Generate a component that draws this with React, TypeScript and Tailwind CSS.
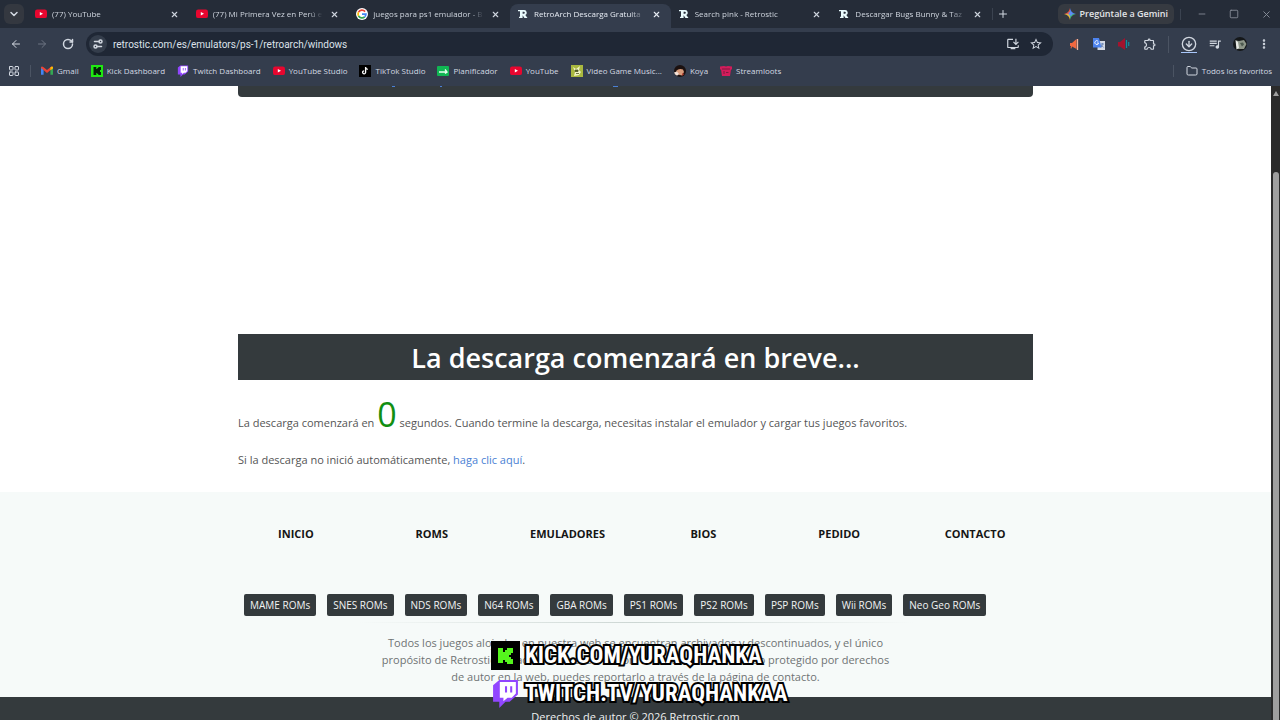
import type { ReactNode } from "react";
import {
  ChevronDown,
  X,
  Plus,
  Minus,
  Square,
  ArrowLeft,
  ArrowRight,
  RotateCw,
  EllipsisVertical,
  Folder,
  LayoutGrid,
  CircleArrowDown,
  Settings2,
} from "lucide-react";
import { MdInstallDesktop, MdOutlineExtension, MdQueueMusic, MdStarBorder } from "react-icons/md";

const YouTubeIcon = () => (
  <svg viewBox="0 0 12 12" className="size-3 shrink-0">
    <rect x="0" y="1.5" width="12" height="8.6" rx="2.2" fill="#e8062f" />
    <path d="M4.8 4 8 5.8 4.8 7.6z" fill="#fff" />
  </svg>
);

const GoogleIcon = () => (
  <svg viewBox="0 0 24 24" className="size-3 shrink-0">
    <circle cx="12" cy="12" r="12" fill="#fff" />
    <path d="M18.2 7.2A8 8 0 0 0 5 8.3" fill="none" stroke="#ea4335" strokeWidth="3.4" />
    <path d="M5 8.3a8 8 0 0 0 0 7.4" fill="none" stroke="#fbbc05" strokeWidth="3.4" />
    <path d="M5 15.7a8 8 0 0 0 12.4 2.1" fill="none" stroke="#34a853" strokeWidth="3.4" />
    <path d="M17.4 17.8a8 8 0 0 0 2.5-5.6H12" fill="none" stroke="#4285f4" strokeWidth="3.4" />
  </svg>
);

const RetrosticIcon = () => (
  <svg viewBox="0 0 12 12" className="size-3 shrink-0">
    <path
      d="M1 2h6.200a2.700 2.700 0 0 1 1.100 5.100L10.500 10H7.500L5.600 7.300V10H2V8.800h1V3.200H1z M5.600 3.700v2h1.200a1 1 0 0 0 0-2z"
      fill="#e9fbfd"
      fillRule="evenodd"
    />
  </svg>
);

const GmailIcon = () => (
  <svg viewBox="0 0 12 12" className="size-3 shrink-0">
    <path d="M0 2.500v7.300h2.600V4.500z" fill="#4285f4" />
    <path d="M12 2.500v7.300H9.400V4.500z" fill="#34a853" />
    <path d="M0 3V2q1-1 2.600.3L6 4.900l3.400-2.600Q11 1 12 2v1L6 7.900z" fill="#ea4335" />
    <path d="M9.400 2.300Q11 1 12 2v1.400L9.400 5.300z" fill="#fbbc05" />
  </svg>
);

const KickIcon = () => (
  <svg viewBox="0 0 29 29" className="size-[29px] shrink-0">
    <rect width="29" height="29" fill="#000" />
    <path d="M7 7h5v4h2V9h2V7h6v5h-2v2h-2v2h2v2h2v5h-6v-2h-2v-2h-2v3H7z" fill="#55f51d" />
  </svg>
);

const KickTile = () => (
  <svg viewBox="0 0 12 12" className="size-3 shrink-0">
    <rect width="12" height="12" fill="#20e812" />
    <path d="M2.500 2h2.800v2h1V3h1V2h2.700v3H9v2h1v3H7.300V9h-1V8h-1v2H2.500z" fill="#06210a" />
  </svg>
);

const TwitchIcon = ({ className = "size-3" }: { className?: string }) => (
  <svg viewBox="0 0 26 28" className={`${className} shrink-0`}>
    <path d="M1 6 7 1h18v14l-8 7h-4l-6 6v-6H1z" fill="#9146ff" />
    <path d="M7.500 3H23v11l-4 4h-4l-4 3.500V18H7.500z" fill="#fff" />
    <path d="M12.500 7h2v6h-2zM17.500 7h2v6h-2z" fill="#9146ff" />
  </svg>
);

const TikTokIcon = () => (
  <svg viewBox="0 0 12 12" className="size-3 shrink-0">
    <rect width="12" height="12" fill="#000" />
    <path d="M6.600 2v5.300a1.500 1.500 0 1 1-1.500-1.500M6.600 2.200q.2 1.900 2.200 2.100" fill="none" stroke="#fff" strokeWidth="1.300" />
  </svg>
);

const PlannerIcon = () => (
  <svg viewBox="0 0 12 12" className="size-3 shrink-0">
    <rect y="1" width="12" height="10" rx="1" fill="#10b653" />
    <path d="M2 7h8M8 4.500 10 7 8 8.500" fill="none" stroke="#e8fff0" strokeWidth="1.400" />
  </svg>
);

const MusicIcon = () => (
  <svg viewBox="0 0 12 12" className="size-3 shrink-0">
    <rect width="12" height="12" fill="#a9b83f" />
    <path d="M2 2 5 4l4-3-1 4 2 2-2 3-5 1 1-4z" fill="#f1f3c3" />
    <path d="M4 5h3v1.500H4zM5 8.500h3" fill="#515c20" stroke="#515c20" strokeWidth=".8" />
  </svg>
);

const KoyaIcon = () => (
  <svg viewBox="0 0 12 12" className="size-3 shrink-0">
    <circle cx="6" cy="6" r="6" fill="#1b1110" />
    <path d="M2 6q3-3 7-1.500l1 2.500-2 3.500-4-1z" fill="#d99c7b" />
    <path d="M0 7.500 3 6.500l2 2.500-2 1.800A6 6 0 0 1 0 7.500z" fill="#f3e2d8" />
    <path d="m8 8 2 1-1.500 2z" fill="#c13d2e" />
  </svg>
);

const LootsIcon = () => (
  <svg viewBox="0 0 12 12" className="size-3 shrink-0">
    <path d="M0 1.500 4 1l2 .5L8 1l4 .5v3h-1L10 11H2L1 4.500H0z" fill="#d31c5b" />
    <path d="M2 4h8M4 6v3M6 7.500h2.500" stroke="#7c1a40" fill="none" />
  </svg>
);

const GeminiIcon = () => (
  <svg viewBox="0 0 12 12" className="size-3 shrink-0">
    <path d="M6 0q.8 5.200 6 6H6z" fill="#5484f0" />
    <path d="M6 0q-.8 5.200-6 6h6z" fill="#e95a4c" />
    <path d="M0 6q5.200.8 6 6V6z" fill="#e3b93b" />
    <path d="M12 6q-5.200.8-6 6V6z" fill="#42b37c" />
    <circle cx="6.500" cy="5.800" r="2" fill="#5d8ff2" />
  </svg>
);

const MegaphoneIcon = () => (
  <svg viewBox="0 0 12 12" className="size-3">
    <path d="M2 5h2l4.500-4v10L4 8.500l-.5 2-1-.2L3 8H2z" fill="#f2683f" />
    <path d="M9.500 1v11" stroke="#f0b49d" strokeWidth="1.300" />
  </svg>
);

const TranslateIcon = () => (
  <svg viewBox="0 0 12 12" className="size-3">
    <rect x="4.500" y="3" width="7.500" height="9" fill="#d4dae4" />
    <path d="M0 0h6l2.500 9.500H0z" fill="#4c83ef" />
    <path d="M5.300 3.500A1.900 1.900 0 1 0 5.600 5H4" fill="none" stroke="#fff" strokeWidth=".9" />
    <path d="M7.500 6H11M9.300 5v1q0 2-1.500 3.500M8.200 7l2.500 2.500" fill="none" stroke="#5878b0" strokeWidth=".8" />
  </svg>
);

const SoundIcon = () => (
  <svg viewBox="0 0 12 12" className="size-3">
    <path d="M0 4h2l5-4v12L2 8.500H0z" fill="#a3142e" />
    <path d="M8.500 2v8M10.700 4v4" stroke="#168c9f" strokeWidth="1.200" />
  </svg>
);

const AvatarIcon = () => (
  <svg viewBox="0 0 14 14" className="size-[14px]">
    <circle cx="7" cy="7" r="7" fill="#15181a" />
    <path d="M3 3.500 6 4l5-1 2.500 4L11 12H4.500z" fill="#8d9689" />
    <path d="M2.500 3 5 5l1 6-2.500 1.500z" fill="#e8eae5" />
    <path d="m7 6 3-.5 1 2-2 2z" fill="#4d5a50" />
  </svg>
);

type Tab = { title: string; icon: ReactNode; active?: boolean };

const tabs: Tab[] = [
  { title: "(77) YouTube", icon: <YouTubeIcon /> },
  { title: "(77) Mi Primera Vez en Perú e", icon: <YouTubeIcon /> },
  { title: "juegos para ps1 emulador - B", icon: <GoogleIcon /> },
  { title: "RetroArch Descarga Gratuita", icon: <RetrosticIcon />, active: true },
  { title: "Search pink - Retrostic", icon: <RetrosticIcon /> },
  { title: "Descargar Bugs Bunny & Taz", icon: <RetrosticIcon /> },
];

const bookmarks = [
  { label: "Gmail", icon: <GmailIcon /> },
  { label: "Kick Dashboard", icon: <KickTile /> },
  { label: "Twitch Dashboard", icon: <TwitchIcon /> },
  { label: "YouTube Studio", icon: <YouTubeIcon /> },
  { label: "TikTok Studio", icon: <TikTokIcon /> },
  { label: "Planificador", icon: <PlannerIcon /> },
  { label: "YouTube", icon: <YouTubeIcon /> },
  { label: "Video Game Music...", icon: <MusicIcon /> },
  { label: "Koya", icon: <KoyaIcon /> },
  { label: "Streamloots", icon: <LootsIcon /> },
];

const footerLinks = ["INICIO", "ROMS", "EMULADORES", "BIOS", "PEDIDO", "CONTACTO"];

const consoles = ["MAME", "SNES", "NDS", "N64", "GBA", "PS1", "PS2", "PSP", "Wii", "Neo Geo"];

function TabStrip() {
  return (
    <div className="flex h-7 items-center bg-[#252c38] px-1">
      <button aria-label="Buscar pestañas" className="flex size-5 shrink-0 items-center justify-center rounded-md bg-[#343840]">
        <ChevronDown className="size-3" strokeWidth={3} />
      </button>
      <div className="ml-1 flex max-w-[964px] flex-1 self-stretch pt-1">
        {tabs.map((tab) => (
          <div
            key={tab.title}
            className={`flex min-w-0 flex-1 items-center gap-[5px] pr-[10px] pb-1 pl-[7px] ${
              tab.active ? "rounded-t-lg bg-[#343d4d] text-[#e6ebf3]" : "text-[#cfd5de]"
            }`}
          >
            {tab.icon}
            <span className="min-w-0 flex-1 overflow-hidden whitespace-nowrap [mask-image:linear-gradient(to_right,black_85%,transparent_98%)]">
              {tab.title}
            </span>
            <button aria-label={`Cerrar ${tab.title}`}>
              <X className="size-[9px]" strokeWidth={3} />
            </button>
          </div>
        ))}
      </div>
      <button aria-label="Nueva pestaña" className="border-l border-[#3b4350] pl-1">
        <Plus className="size-3" strokeWidth={2} />
      </button>
      <button className="ml-auto flex h-5 items-center gap-1 rounded-md bg-[#363a41] px-[6px] text-[9px] font-semibold text-[#e3e5e8]">
        <GeminiIcon />
        Pregúntale a Gemini
      </button>
      <div className="ml-[6px] flex items-center gap-[22px] border-l border-[#3b4350] pr-1 pl-4 text-[#8b929c]">
        <button aria-label="Minimizar"><Minus className="size-[10px]" /></button>
        <button aria-label="Maximizar"><Square className="size-[10px]" /></button>
        <button aria-label="Cerrar"><X className="size-[11px]" /></button>
      </div>
    </div>
  );
}

function Toolbar() {
  return (
    <div className="flex h-8 items-center bg-[#343d4d] px-[10px] text-[#d1d7e0]">
      <div className="flex items-center gap-[14px]">
        <button aria-label="Atrás"><ArrowLeft className="size-3" strokeWidth={2} /></button>
        <button aria-label="Adelante" className="text-[#6d7583]"><ArrowRight className="size-3" strokeWidth={2} /></button>
        <button aria-label="Recargar"><RotateCw className="size-3" strokeWidth={3} /></button>
      </div>
      <div className="ml-3 flex h-6 flex-1 items-center rounded-full bg-[#1f2735] pr-[10px] pl-[3px]">
        <button aria-label="Información del sitio" className="flex size-[18px] items-center justify-center rounded-full bg-[#343d4b]">
          <Settings2 className="size-3 -scale-y-100" strokeWidth={3} />
        </button>
        <input
          aria-label="Dirección"
          defaultValue="retrostic.com/es/emulators/ps-1/retroarch/windows"
          className="ml-[6px] min-w-0 flex-1 bg-transparent font-[Roboto,sans-serif] text-[10px] text-[#dde2ea] outline-none"
        />
        <button aria-label="Instalar"><MdInstallDesktop className="size-[14px]" /></button>
        <button aria-label="Favorito" className="ml-[9px]"><MdStarBorder className="size-[14px]" /></button>
      </div>
      <div className="ml-[15px] flex items-center gap-[13px]">
        <button aria-label="Megáfono"><MegaphoneIcon /></button>
        <button aria-label="Traductor"><TranslateIcon /></button>
        <button aria-label="Volumen"><SoundIcon /></button>
        <button aria-label="Extensiones"><MdOutlineExtension className="size-[14px]" /></button>
      </div>
      <div className="ml-[11px] flex items-center gap-[11px] border-l border-[#4b5463] pl-3">
        <button aria-label="Descargas" className="border-b border-[#a9c7fa]">
          <CircleArrowDown className="size-4" strokeWidth={2} />
        </button>
        <button aria-label="Multimedia"><MdQueueMusic className="size-[14px]" /></button>
        <button aria-label="Perfil"><AvatarIcon /></button>
        <button aria-label="Menú"><EllipsisVertical className="size-3" strokeWidth={3} /></button>
      </div>
    </div>
  );
}

function BookmarksBar() {
  return (
    <nav className="flex h-[26px] items-center bg-[#343d4d] px-2 pb-1 text-[#d3d9e2]">
      <button aria-label="Aplicaciones"><LayoutGrid className="size-3" strokeWidth={2} /></button>
      <div className="ml-[10px] flex items-center gap-3 border-l border-[#4b5463] pl-[10px]">
        {bookmarks.map((b) => (
          <a key={b.label} href="#" className="flex items-center gap-1 whitespace-nowrap">
            {b.icon}
            {b.label}
          </a>
        ))}
      </div>
      <a href="#" className="ml-auto flex items-center gap-1 border-l border-[#4b5463] pl-3 whitespace-nowrap">
        <Folder className="size-3" />
        Todos los favoritos
      </a>
    </nav>
  );
}

function StreamOverlay() {
  return (
    <div className="absolute bottom-3 left-[491px] flex flex-col gap-[9px] font-['Liberation_Sans_Narrow','Roboto_Condensed',Roboto,sans-serif] text-[23px] leading-[28px] font-bold text-white [paint-order:stroke_fill] [-webkit-text-stroke:4px_black]">
      <div className="flex items-center gap-[5px]">
        <KickIcon />
        KICK.COM/YURAQHANKA
      </div>
      <div className="flex items-center gap-[5px]">
        <TwitchIcon className="size-[29px]" />
        TWITCH.TV/YURAQHANKAA
      </div>
    </div>
  );
}

export default function App() {
  return (
    <div className="relative flex h-screen flex-col overflow-hidden bg-white font-['Open_Sans',sans-serif] text-[11px]">
      <header className="shrink-0 text-[8px] text-[#d3d9e2]">
        <TabStrip />
        <Toolbar />
        <BookmarksBar />
      </header>

      <div className="flex min-h-0 flex-1">
        <div className="flex min-w-0 flex-1 flex-col text-[#555]">
          <main className="mx-auto w-full max-w-[795px]">
            <div className="h-[11px] rounded-b-sm bg-[#343a3d]">
              {/* Descenders of the links scrolled out of view */}
              <svg viewBox="0 0 795 2" className="h-[2px] w-full">
                <path d="M154 0h3v1h-3zM202 0h2v1h-2zM375 0h5v1h-5z" fill="#4a7fd4" />
              </svg>
            </div>
            <h1 className="mt-[237px] bg-[#343a3d] pt-[2px] text-center text-[27px] leading-[44px] font-semibold text-white">
              La descarga comenzará en breve...
            </h1>
            <p className="mt-3 leading-[44px]">
              La descarga comenzará en <span className="text-[34px] leading-[44px] text-[#128f12]">0</span> segundos. Cuando termine la
              descarga, necesitas instalar el emulador y cargar tus juegos favoritos.
            </p>
            <p className="mt-[7px] mb-6 leading-4">
              Si la descarga no inició automáticamente,{" "}
              <a href="#" className="text-[#4a7fd4]">haga clic aquí</a>.
            </p>
          </main>

          <footer className="flex flex-1 flex-col bg-[#f6faf9]">
            <div className="mx-auto w-full max-w-[815px]">
              <nav className="grid grid-cols-6 pt-[34px] text-center leading-4 font-bold text-[#151515]">
                {footerLinks.map((link) => (
                  <a key={link} href="#">{link}</a>
                ))}
              </nav>
              <div className="mt-[52px] flex gap-[11px] pl-4">
                {consoles.map((name) => (
                  <a key={name} href="#" className="rounded-xs bg-[#343a3d] px-[6px] text-[10px] leading-[22px] font-medium whitespace-nowrap text-[#f2f4f4]">
                    {name} ROMs
                  </a>
                ))}
              </div>
              <div className="mx-auto mt-[6px] h-px w-[556px] bg-linear-to-r from-transparent via-[#ccd6d3] to-transparent" />
              <p className="mx-auto mt-[11px] max-w-[560px] text-center leading-[17px] text-[#6f7374]">
                Todos los juegos alojados en nuestra web se encuentran archivados y descontinuados, y el único
                <br />
                propósito de Retrostic es facilitar su conservación. Si encuentras contenido protegido por derechos
                <br />
                de autor en la web, puedes reportarlo a través de la página de contacto.
              </p>
            </div>
            <p className="mt-3 flex-1 bg-[#343a3d] pt-3 text-center leading-4 text-[#eef0f0]">
              Derechos de autor © 2026 Retrostic.com
            </p>
          </footer>
        </div>

        {/* Scrollbar */}
        <div className="flex w-[9px] flex-col items-center bg-[#2b2b2b]">
          <svg viewBox="0 0 8 8" className="mt-1 size-2">
            <path d="M4 1 7 6H1z" fill="#9f9f9f" />
          </svg>
          <div className="mt-[74px] w-[6px] flex-1 rounded-t-full bg-[#9f9f9f]" />
        </div>
      </div>

      <StreamOverlay />
    </div>
  );
}
